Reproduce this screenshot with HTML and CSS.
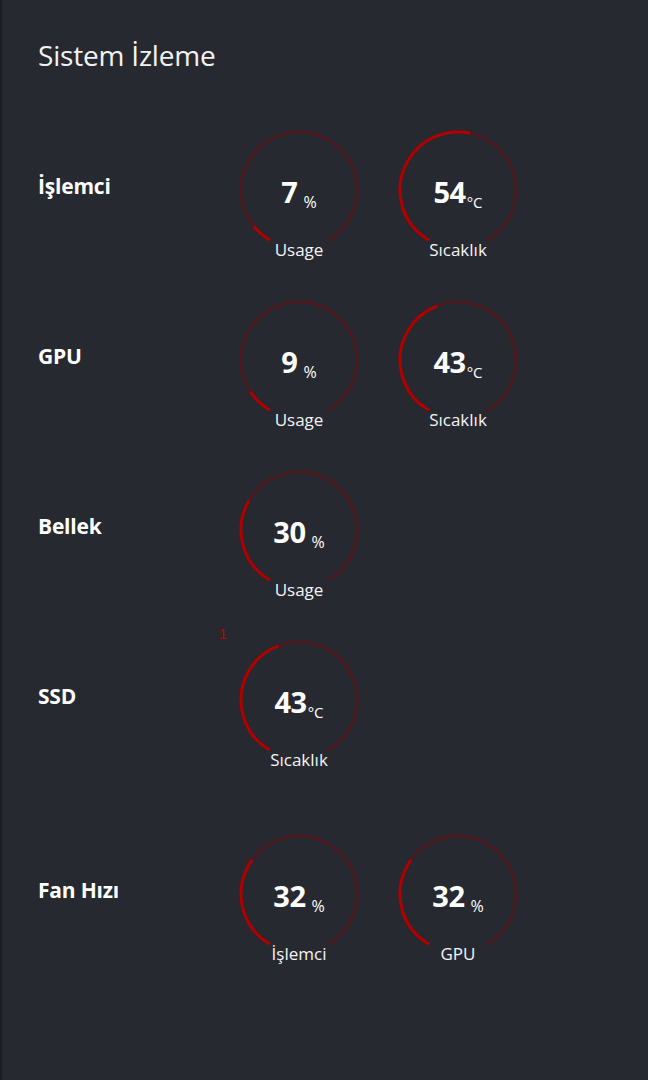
FILE: index.html
```html
<!DOCTYPE html>
<html lang="tr">
<head>
<meta charset="utf-8">
<title>Sistem İzleme</title>
<link rel="stylesheet" href="styles.css">
</head>
<body>
<main class="page">
  <h1 class="title">Sistem İzleme</h1>

  <section class="row">
    <div class="row-label">İşlemci</div>
    <div class="gauges">
      <div class="gauge">
        <div class="dial">
          <svg class="ring" viewBox="0 0 124 124" width="124" height="124">
            <circle class="track" cx="62" cy="62" r="58" stroke-dasharray="303.69 364.42" transform="rotate(120 62 62)"/>
            <circle class="bar" cx="62" cy="62" r="58" stroke-dasharray="21.26 364.42" transform="rotate(120 62 62)"/>
          </svg>
          <div class="value"><span class="num">7</span><span class="unit pct">%</span></div>
        </div>
        <div class="caption">Usage</div>
      </div>
      <div class="gauge">
        <div class="dial">
          <svg class="ring" viewBox="0 0 124 124" width="124" height="124">
            <circle class="track" cx="62" cy="62" r="58" stroke-dasharray="303.69 364.42" transform="rotate(120 62 62)"/>
            <circle class="bar" cx="62" cy="62" r="58" stroke-dasharray="163.99 364.42" transform="rotate(120 62 62)"/>
          </svg>
          <div class="value"><span class="num">54</span><span class="unit deg">°C</span></div>
        </div>
        <div class="caption">Sıcaklık</div>
      </div>
    </div>
  </section>

  <section class="row">
    <div class="row-label">GPU</div>
    <div class="gauges">
      <div class="gauge">
        <div class="dial">
          <svg class="ring" viewBox="0 0 124 124" width="124" height="124">
            <circle class="track" cx="62" cy="62" r="58" stroke-dasharray="303.69 364.42" transform="rotate(120 62 62)"/>
            <circle class="bar" cx="62" cy="62" r="58" stroke-dasharray="27.33 364.42" transform="rotate(120 62 62)"/>
          </svg>
          <div class="value"><span class="num">9</span><span class="unit pct">%</span></div>
        </div>
        <div class="caption">Usage</div>
      </div>
      <div class="gauge">
        <div class="dial">
          <svg class="ring" viewBox="0 0 124 124" width="124" height="124">
            <circle class="track" cx="62" cy="62" r="58" stroke-dasharray="303.69 364.42" transform="rotate(120 62 62)"/>
            <circle class="bar" cx="62" cy="62" r="58" stroke-dasharray="130.59 364.42" transform="rotate(120 62 62)"/>
          </svg>
          <div class="value"><span class="num">43</span><span class="unit deg">°C</span></div>
        </div>
        <div class="caption">Sıcaklık</div>
      </div>
    </div>
  </section>

  <section class="row">
    <div class="row-label">Bellek</div>
    <div class="gauges">
      <div class="gauge">
        <div class="dial">
          <svg class="ring" viewBox="0 0 124 124" width="124" height="124">
            <circle class="track" cx="62" cy="62" r="58" stroke-dasharray="303.69 364.42" transform="rotate(120 62 62)"/>
            <circle class="bar" cx="62" cy="62" r="58" stroke-dasharray="91.11 364.42" transform="rotate(120 62 62)"/>
          </svg>
          <div class="value"><span class="num">30</span><span class="unit pct">%</span></div>
        </div>
        <div class="caption">Usage</div>
      </div>
    </div>
  </section>

  <section class="row">
    <div class="row-label">SSD</div>
    <div class="gauges">
      <div class="gauge">
        <span class="marker">1</span>
        <div class="dial">
          <svg class="ring" viewBox="0 0 124 124" width="124" height="124">
            <circle class="track" cx="62" cy="62" r="58" stroke-dasharray="303.69 364.42" transform="rotate(120 62 62)"/>
            <circle class="bar" cx="62" cy="62" r="58" stroke-dasharray="130.59 364.42" transform="rotate(120 62 62)"/>
          </svg>
          <div class="value"><span class="num">43</span><span class="unit deg">°C</span></div>
        </div>
        <div class="caption">Sıcaklık</div>
      </div>
    </div>
  </section>

  <section class="row row-fan">
    <div class="row-label">Fan Hızı</div>
    <div class="gauges">
      <div class="gauge">
        <div class="dial">
          <svg class="ring" viewBox="0 0 124 124" width="124" height="124">
            <circle class="track" cx="62" cy="62" r="58" stroke-dasharray="303.69 364.42" transform="rotate(120 62 62)"/>
            <circle class="bar" cx="62" cy="62" r="58" stroke-dasharray="97.18 364.42" transform="rotate(120 62 62)"/>
          </svg>
          <div class="value"><span class="num">32</span><span class="unit pct">%</span></div>
        </div>
        <div class="caption">İşlemci</div>
      </div>
      <div class="gauge">
        <div class="dial">
          <svg class="ring" viewBox="0 0 124 124" width="124" height="124">
            <circle class="track" cx="62" cy="62" r="58" stroke-dasharray="303.69 364.42" transform="rotate(120 62 62)"/>
            <circle class="bar" cx="62" cy="62" r="58" stroke-dasharray="97.18 364.42" transform="rotate(120 62 62)"/>
          </svg>
          <div class="value"><span class="num">32</span><span class="unit pct">%</span></div>
        </div>
        <div class="caption">GPU</div>
      </div>
    </div>
  </section>
</main>
</body>
</html>
```

FILE: styles.css
```css
html, body {
  margin: 0;
  padding: 0;
  height: 100%;
}

body {
  background: #262930;
  color: #ffffff;
  font-family: "Open Sans", "Noto Sans", "DejaVu Sans", sans-serif;
  border-left: 2px solid #1c1d21;
  box-sizing: border-box;
}

.page {
  padding: 33px 0 0 36px;
}

.title {
  margin: 0 0 51px 0;
  font-size: 28px;
  line-height: 44px;
  font-weight: 400;
  color: #f2f2f2;
  letter-spacing: -0.2px;
}

.row {
  display: flex;
  height: 170px;
}

.row-fan {
  margin-top: 24px;
}

.row-label {
  width: 199px;
  margin-top: 44px;
  font-size: 21px;
  line-height: 28px;
  font-weight: 700;
  color: #ffffff;
  letter-spacing: -0.2px;
}

.gauges {
  display: flex;
  gap: 35px;
}

.gauge {
  position: relative;
  width: 124px;
  display: flex;
  flex-direction: column;
  align-items: center;
}

.dial {
  position: relative;
  width: 124px;
  height: 124px;
}

.ring {
  display: block;
}

.ring circle {
  fill: none;
  stroke-width: 3;
}

.track {
  stroke: #4a1a1e;
}

.bar {
  stroke: #b00000;
}

.value {
  position: absolute;
  inset: 0;
  display: flex;
  align-items: center;
  justify-content: center;
  padding-top: 2px;
  white-space: nowrap;
}

.num {
  font-size: 29px;
  font-weight: 700;
  line-height: 1;
  letter-spacing: -0.5px;
}

.unit {
  font-size: 16px;
  font-weight: 400;
  line-height: 1;
  align-self: flex-end;
  margin-bottom: 42px;
}

.pct {
  margin-left: 6px;
}

.deg {
  margin-left: 1px;
  font-size: 15px;
}

.caption {
  margin-top: -13px;
  font-size: 17px;
  line-height: 22px;
  color: #f4f4f4;
}

.marker {
  position: absolute;
  top: -12px;
  left: -18px;
  font-size: 14px;
  line-height: 16px;
  font-family: "Liberation Sans", sans-serif;
  color: #c00000;
}
```
